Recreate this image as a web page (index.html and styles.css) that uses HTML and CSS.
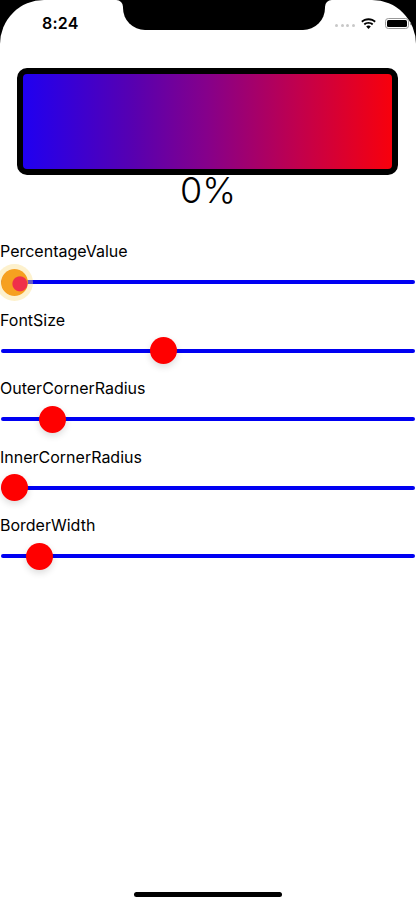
FILE: index.html
```html
<!DOCTYPE html>
<html lang="en">
<head>
  <meta charset="UTF-8" />
  <title>Progress Bar</title>
  <meta name="viewport" content="width=device-width, initial-scale=1.0" />
  <link rel="stylesheet" href="styles.css">
</head>
<body>
  <div class="status">
    <div class="ear left"><span class="time">8:24</span></div>
    <div class="notch-wrap"><div class="notch"></div></div>
    <div class="ear right">
      <span class="dots"><i></i><i></i><i></i><i></i></span>
      <svg class="wifi" width="15" height="11" viewBox="0 0 15 11">
        <path d="M7.5 0.2C4.6 0.2 2.1 1.3 0.2 3.1l1.3 1.4C3 3 5.1 2.2 7.5 2.2s4.5 0.8 6 2.3l1.3-1.4C12.9 1.3 10.4 0.2 7.5 0.2z" fill="#000"/>
        <path d="M7.5 3.9c-1.9 0-3.6 0.7-4.8 1.9l1.3 1.4c0.9-0.9 2.1-1.4 3.5-1.4s2.6 0.5 3.5 1.4l1.3-1.4C11.1 4.6 9.4 3.9 7.5 3.9z" fill="#000"/>
        <path d="M7.5 7.5c-0.9 0-1.7 0.3-2.3 0.9l2.3 2.5 2.3-2.5C9.2 7.8 8.4 7.5 7.5 7.5z" fill="#000"/>
      </svg>
      <svg class="battery" width="27" height="11" viewBox="0 0 27 11">
        <rect x="0.5" y="0.5" width="23" height="10" rx="2.8" fill="none" stroke="#999" stroke-width="1"/>
        <rect x="2" y="2" width="20" height="7" rx="1.5" fill="#000"/>
        <path d="M25 3.8v3.4c0.7-0.3 1.2-1 1.2-1.7s-0.5-1.4-1.2-1.7z" fill="#999"/>
      </svg>
    </div>
  </div>

  <div class="meter"></div>
  <div class="value">0%</div>

  <div class="controls">
    <div class="control active">
      <label>PercentageValue</label>
      <input type="range" min="0" max="100" step="0.1" value="0">
    </div>
    <div class="control">
      <label>FontSize</label>
      <input type="range" min="0" max="100" step="0.1" value="38.6">
    </div>
    <div class="control">
      <label>OuterCornerRadius</label>
      <input type="range" min="0" max="100" step="0.1" value="9.9">
    </div>
    <div class="control">
      <label>InnerCornerRadius</label>
      <input type="range" min="0" max="100" step="0.1" value="0">
    </div>
    <div class="control">
      <label>BorderWidth</label>
      <input type="range" min="0" max="100" step="0.1" value="6.4">
    </div>
  </div>

  <div class="home"></div>
</body>
</html>
```

FILE: styles.css
```css
* {
  box-sizing: border-box;
}

html, body {
  height: 100%;
}

body {
  margin: 0;
  background: #fff;
  color: #000;
  font-family: "Inter", "Roboto", sans-serif;
  display: flex;
  flex-direction: column;
}

/* Status bar */
.status {
  display: flex;
  height: 44px;
  background: #000;
  flex-shrink: 0;
}

.ear {
  flex: 1;
  background: #fff;
  display: flex;
  align-items: center;
  padding-top: 2px;
}

.ear.left {
  border-radius: 46px 7px 0 0;
  padding-left: 42px;
}

.ear.right {
  border-radius: 7px 46px 0 0;
  padding-left: 10px;
}

.notch-wrap {
  width: 202px;
  background: #fff;
}

.notch {
  height: 30px;
  background: #000;
  border-radius: 0 0 22px 22px;
}

.time {
  font-size: 16px;
  font-weight: 600;
  letter-spacing: 0.2px;
}

.dots {
  display: flex;
  gap: 2.5px;
  margin-top: 4px;
}

.dots i {
  width: 3px;
  height: 3px;
  border-radius: 50%;
  background: #c8c8c8;
}

.wifi {
  margin-left: 6px;
}

.battery {
  margin-left: 9px;
}

/* Progress box */
.meter {
  margin: 24px 18px 0 17px;
  height: 107px;
  border: 6px solid #000;
  border-radius: 10px;
  background: linear-gradient(90deg, #2000f0 0%, #5800b0 30%, #86008a 50%, #c2004c 75%, #f8000c 100%);
  flex-shrink: 0;
}

.value {
  text-align: center;
  font-size: 36px;
  font-weight: 300;
  line-height: 30px;
  height: 30px;
}

/* Sliders */
.controls {
  margin-top: 36px;
  display: flex;
  flex-direction: column;
  gap: 6.5px;
}

.control label {
  display: block;
  font-size: 16px;
  line-height: 20px;
}

.control input[type=range] {
  -webkit-appearance: none;
  appearance: none;
  display: block;
  width: calc(100% - 2px);
  margin: 0 1px;
  height: 42px;
  background: transparent;
}

.control input[type=range]::-webkit-slider-runnable-track {
  height: 4px;
  background: #0000f2;
  border-radius: 2px;
}

.control input[type=range]::-webkit-slider-thumb {
  -webkit-appearance: none;
  width: 27px;
  height: 27px;
  margin-top: -11.5px;
  border-radius: 50%;
  background: #ff0000;
  box-shadow: 0 3px 7px rgba(0,0,0,0.14);
}

.control.active input[type=range]::-webkit-slider-thumb {
  background: radial-gradient(circle at 70% 55%, #f0304a 0 7px, #f6a020 8px);
  box-shadow: 0 0 0 5px rgba(250,220,130,0.4);
}

/* Home indicator */
.home {
  width: 148px;
  height: 5px;
  border-radius: 3px;
  background: #000;
  margin: auto auto 7px;
  flex-shrink: 0;
}
```
